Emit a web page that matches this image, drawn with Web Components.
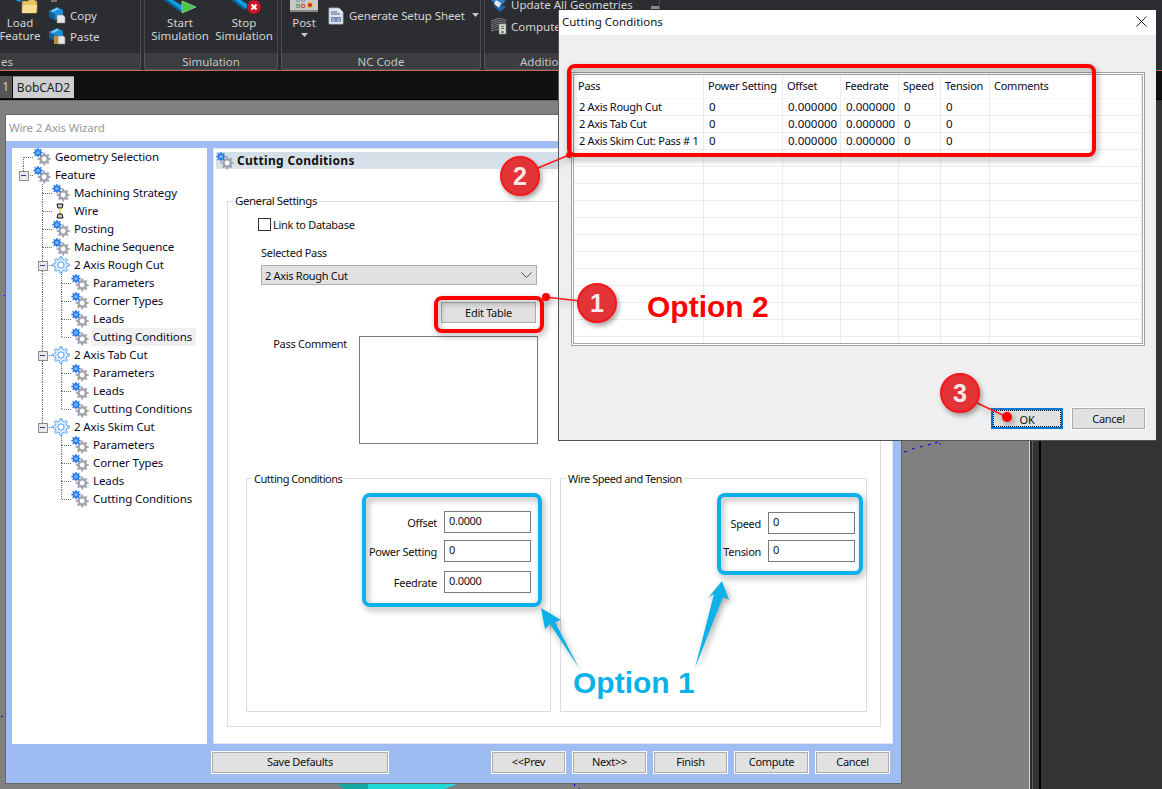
<!DOCTYPE html>
<html lang="en"><head><meta charset="utf-8"><title>Wire 2 Axis Wizard</title>
<style>html,body{margin:0;padding:0;background:#333}</style></head>
<body>
<cad-app>
  <cad-ribbon slot="ribbon">
    <ribbon-group label="es" style="margin-left:-10px;width:151px" align="left">
      <ribbon-big icon="load" style="width:58px">Load<br>Feature</ribbon-big>
      <ribbon-col style="padding-bottom:6px">
        <ribbon-small icon="cut"></ribbon-small>
        <ribbon-small icon="copy">Copy</ribbon-small>
        <ribbon-small icon="paste">Paste</ribbon-small>
      </ribbon-col>
    </ribbon-group>
    <ribbon-group label="Simulation" style="width:134px">
      <ribbon-big icon="start" style="width:64px;margin-left:3px">Start<br>Simulation</ribbon-big>
      <ribbon-big icon="stop" style="width:64px">Stop<br>Simulation</ribbon-big>
    </ribbon-group>
    <ribbon-group label="NC Code" style="width:200px">
      <ribbon-big icon="post" caret style="width:44px">Post</ribbon-big>
      <ribbon-col style="margin-left:2px;padding-bottom:27px;letter-spacing:-.1px">
        <ribbon-small icon="doc" caret>Generate Setup Sheet</ribbon-small>
      </ribbon-col>
    </ribbon-group>
    <ribbon-group label="Additio" style="width:176px" labelpad="35">
      <ribbon-col style="margin-left:5px;padding-bottom:16px;gap:1px">
        <ribbon-small icon="update" extra>Update All Geometries</ribbon-small>
        <ribbon-small icon="compute">Compute</ribbon-small>
      </ribbon-col>
    </ribbon-group>
  </cad-ribbon>
  <cad-tabs slot="tabs">
    <cad-tab>1</cad-tab>
    <cad-tab active>BobCAD2</cad-tab>
  </cad-tabs>
  <cad-workspace slot="workspace"></cad-workspace>

  <wizard-window slot="windows">
    <wizard-tree slot="tree">
      <tree-row g="r" icon="gears">Geometry Selection</tree-row>
      <tree-row g="E" icon="gears">Feature</tree-row>
      <tree-row g=" t" icon="gears">Machining Strategy</tree-row>
      <tree-row g=" t" icon="wire">Wire</tree-row>
      <tree-row g=" t" icon="gears">Posting</tree-row>
      <tree-row g=" t" icon="gears">Machine Sequence</tree-row>
      <tree-row g=" X" icon="pass">2 Axis Rough Cut</tree-row>
      <tree-row g=" vt" icon="gears">Parameters</tree-row>
      <tree-row g=" vt" icon="gears">Corner Types</tree-row>
      <tree-row g=" vt" icon="gears">Leads</tree-row>
      <tree-row g=" vl" icon="gears" selected>Cutting Conditions</tree-row>
      <tree-row g=" X" icon="pass">2 Axis Tab Cut</tree-row>
      <tree-row g=" vt" icon="gears">Parameters</tree-row>
      <tree-row g=" vt" icon="gears">Leads</tree-row>
      <tree-row g=" vl" icon="gears">Cutting Conditions</tree-row>
      <tree-row g=" E" icon="pass">2 Axis Skim Cut</tree-row>
      <tree-row g="  t" icon="gears">Parameters</tree-row>
      <tree-row g="  t" icon="gears">Corner Types</tree-row>
      <tree-row g="  t" icon="gears">Leads</tree-row>
      <tree-row g="  l" icon="gears">Cutting Conditions</tree-row>
    </wizard-tree>
    <wizard-panel slot="panel" heading="Cutting Conditions">
      <group-box label="General Settings" lt="-9" style="height:526px">
        <general-form>
          <group-box slot="left" label="Cutting Conditions" lt="-8" style="width:305px;height:234px">
            <field-stack pad="19" top="32">
              <form-field label="Offset" value="0.0000"></form-field>
              <form-field label="Power Setting" value="0" style="margin-top:7px"></form-field>
              <form-field label="Feedrate" value="0.0000" style="margin-top:9px"></form-field>
            </field-stack>
          </group-box>
          <group-box slot="right" label="Wire Speed and Tension" lt="-8" style="width:307px;height:234px">
            <field-stack pad="11" top="33">
              <form-field label="Speed" value="0"></form-field>
              <form-field label="Tension" value="0" style="margin-top:6px"></form-field>
            </field-stack>
          </group-box>
        </general-form>
      </group-box>
    </wizard-panel>
    <ui-button slot="save" style="width:176px">Save Defaults</ui-button>
    <ui-button slot="nav" style="width:73px">&lt;&lt;Prev</ui-button>
    <ui-button slot="nav" style="width:73px">Next&gt;&gt;</ui-button>
    <ui-button slot="nav" style="width:73px">Finish</ui-button>
    <ui-button slot="nav" style="width:73px">Compute</ui-button>
    <ui-button slot="nav" style="width:73px">Cancel</ui-button>
  </wizard-window>

  <table-dialog slot="windows" heading="Cutting Conditions"></table-dialog>
  <call-outs slot="windows"></call-outs>
</cad-app>

<script>
const def=(name,css,html)=>customElements.define(name,class extends HTMLElement{
  constructor(){super();this.attachShadow({mode:'open'});}
  connectedCallback(){this.shadowRoot.innerHTML=`<style>${css}</style>`+(typeof html==='function'?html(this):html);}
});
function gear(cx,cy,ro,ri,n){
  let d='';const st=Math.PI*2/n;
  for(let i=0;i<n;i++){const a=i*st;
    [[a-st*.28,ri],[a-st*.16,ro],[a+st*.16,ro],[a+st*.28,ri]].forEach((p,j)=>{
      const x=(cx+Math.cos(p[0])*p[1]).toFixed(2),y=(cy+Math.sin(p[0])*p[1]).toFixed(2);
      d+=(i===0&&j===0?'M':'L')+x+' '+y;});
  }
  return d+'Z';
}
const ICONS={
 gears:`<svg width="18" height="18" viewBox="0 0 18 18"><path d="${gear(11.2,11,6.6,4.9,8)}" fill="#a3a4af"/><circle cx="11.2" cy="11" r="2.4" fill="#fff"/><path d="${gear(5,4.6,4.8,3.5,8)}" fill="#2a7de8"/><circle cx="5" cy="4.6" r="1.7" fill="#7fb6f7"/></svg>`,
 pass:`<svg width="18" height="18" viewBox="0 0 18 18"><path d="${gear(9,9,8.3,6.2,8)}" fill="#d8e9fd" stroke="#57a3f4" stroke-width="1"/><circle cx="9" cy="9" r="3.1" fill="#fff" stroke="#57a3f4"/></svg>`,
 wire:`<svg width="18" height="18" viewBox="0 0 18 18"><path d="M5 2h6l-1 4H6z" fill="#ccc" stroke="#111"/><path d="M8 6v6" stroke="#e6d220" stroke-width="1.4"/><path d="M6 12h4l1 4H5z" fill="#ccc" stroke="#111"/></svg>`,
 load:`<svg width="36" height="16" viewBox="0 0 36 16"><path d="M10 0l5 0 5 3-3 1z" fill="#1197db"/><path d="M20 3h6l2-3h5v3h2v12H20z" fill="#e9c45c" stroke="#8d7a45" stroke-width=".8"/><path d="M21 7h14l-1 8H20z" fill="#f7de94"/><path d="M29 0h4v2h-4z" fill="#3fae49"/></svg>`,
 cut:`<svg width="16" height="16" viewBox="0 0 16 16"><path d="M2 13h6v3H2z" fill="#777"/></svg>`,
 copy:`<svg width="17" height="17" viewBox="0 0 17 17"><path d="M0 4l8-4 6 3v6l-8 4-6-3z" fill="#1a8fd6"/><path d="M0 4l6 3v6l-6-3z" fill="#0d5f9a"/><path d="M2 4l6-3 2 1-6 3z" fill="#8cd0f4"/><path d="M8 8h6l2 2v6H8z" fill="#e8e8ea" stroke="#888" stroke-width=".6"/></svg>`,
 paste:`<svg width="17" height="17" viewBox="0 0 17 17"><path d="M0 4l8-4 6 3v6l-8 4-6-3z" fill="#1a8fd6"/><path d="M0 4l6 3v6l-6-3z" fill="#0d5f9a"/><path d="M2 4l6-3 2 1-6 3z" fill="#8cd0f4"/><path d="M5 8h5v8H5z" fill="#c98a3c"/><path d="M9 8h6l1 2v6H9z" fill="#e8e8ea" stroke="#888" stroke-width=".6"/></svg>`,
 start:`<svg width="44" height="16" viewBox="0 0 44 16"><path d="M6 0h6l16 10-4 3z" fill="#0a9fe6"/><path d="M6 0l18 13-2 1L4 1z" fill="#0a5e94"/><path d="M24 3l14 6-14 6z" fill="#4cc24f" stroke="#8fe08a" stroke-width=".8"/></svg>`,
 stop:`<svg width="44" height="16" viewBox="0 0 44 16"><path d="M10 0h6l12 8-4 3z" fill="#0a9fe6"/><path d="M10 0l14 11-2 1L8 1z" fill="#0a5e94"/><circle cx="32" cy="9" r="7" fill="#c9182b" stroke="#7c1420" stroke-width=".8"/><path d="M29.500 6.500l5 5m0-5l-5 5" stroke="#fff" stroke-width="2"/></svg>`,
 post:`<svg width="28" height="14" viewBox="0 0 28 14"><path d="M0-4h28v16a2 2 0 0 1-2 2H2a2 2 0 0 1-2-2z" fill="#c9c9c6"/><path d="M0 12h28v2H0z" fill="#88898a"/><g fill="none" stroke-width="1.2"><circle cx="8" cy="2" r="1.7" stroke="#7aa0c8"/><circle cx="13" cy="2" r="1.7" stroke="#7aa0c8"/><circle cx="8" cy="8" r="1.7" stroke="#5aa95a"/><circle cx="13" cy="8" r="1.7" stroke="#d24d4d"/></g><circle cx="20" cy="7" r="2.6" fill="#d62b2b" stroke="#e0c63a"/></svg>`,
 doc:`<svg width="16" height="18" viewBox="0 0 16 18"><path d="M1 1h10l4 4v12H1z" fill="#dfe6f2" stroke="#aeb9cc" stroke-width=".8"/><path d="M3 5h6M3 7h9" stroke="#47638f"/><path d="M3 10h10v5H3z" fill="#6b86b2"/><path d="M4 12h3m2 0h3m-8 2h3m2 0h3" stroke="#e6ecf5" stroke-width=".8"/></svg>`,
 update:`<svg width="17" height="17" viewBox="0 0 17 17"><path d="M0 3l8-3 8 4-7 8z" fill="#2e7fc9"/><path d="M6 4l5 3-2 5-5-4z" fill="#dbe9f5"/><path d="M1 8l6 5 3 3 6-5-3-2-4 3z" fill="#1c65ac"/><path d="M0 0h4v3H0z" fill="#d3a24e"/></svg>`,
 compute:`<svg width="17" height="17" viewBox="0 0 17 17"><g stroke="#7d7d7d" fill="none"><path d="M1 3l8-3 7 2M1 5l8-3 7 2M1 7l8-3 7 2M1 9l8-3 7 2M1 11l8-3 7 2M1 13l8-2"/></g><path d="M9 6h7v10H9z" fill="#d8d8d8" stroke="#888" stroke-width=".6"/><path d="M11 8h3v1h-3zM11 10h3v1h-3z" fill="#666"/><path d="M11 13h3v2h-3z" fill="#4cae4c"/></svg>`
};
const caret=`<svg width="7" height="4" viewBox="0 0 7 4"><path d="M0 0h7L3.500 4z" fill="#c8c8c8"/></svg>`;

def('cad-app',`:host{display:block;position:relative;width:1162px;height:789px;overflow:hidden;background:#333;color:#111;font:11.5px "Noto Sans","Liberation Sans",sans-serif}
 .shell{display:flex;flex-direction:column;height:100%}`,
 `<div class="shell"><slot name="ribbon"></slot><slot name="tabs"></slot><slot name="workspace"></slot></div><slot name="windows"></slot>`);

def('cad-ribbon',`:host{display:flex;gap:3px;height:70px;background:#2c2d31;overflow:hidden;border-bottom:1px solid #c8684a;flex:none}`,`<slot></slot>`);
def('ribbon-group',`:host{display:flex;flex-direction:column;flex:none;height:70px;box-sizing:border-box;color:#d4d4d4;font-size:11.500px}
 .body{flex:1;display:flex;align-items:flex-end;min-height:0;overflow:hidden;height:53px;border-left:1px solid #4a4b4f;border-right:1px solid #4a4b4f}
 .label{height:17px;flex:none;line-height:17px;text-align:center;background:#3c3d41;color:#c4c4c4;border:1px solid #55565a;border-top:0;border-radius:0 0 3px 3px;box-sizing:border-box}`,
 el=>{const p=el.getAttribute('labelpad');const a=el.getAttribute('align');
  const st=p?`text-align:left;padding-left:${p}px`:(a==='left'?'text-align:left;padding-left:10px':'');
  return `<div class="body"><slot></slot></div><div class="label" style="${st}">${el.getAttribute('label')}</div>`});
def('ribbon-big',`:host{display:flex;flex-direction:column;align-items:center;flex:none;line-height:13px;text-align:center;padding-bottom:11px;white-space:nowrap}
 .i{display:block;height:16px;line-height:0;margin-bottom:2px}
 .c{display:block;height:4px;line-height:0;margin-top:4px;margin-bottom:5px}`,
 el=>`<span class="i">${ICONS[el.getAttribute('icon')]||''}</span><span><slot></slot></span>${el.hasAttribute('caret')?`<span class="c">${caret}</span>`:''}`);
def('ribbon-col',`:host{display:flex;flex-direction:column;flex:none;padding-bottom:5px}`,`<slot></slot>`);
def('ribbon-small',`:host{display:flex;align-items:center;height:21px;gap:4px;white-space:nowrap;flex:none}
 .i{width:17px;height:17px;line-height:0;flex:none}.c{margin-left:3px;line-height:0;margin-top:-2px}
 .x{margin:6px 0 0 14px;width:8px;height:3px;background:#8a8b8e;display:block}`,
 el=>`<span class="i">${ICONS[el.getAttribute('icon')]||''}</span><slot></slot>${el.hasAttribute('caret')?`<span class="c">${caret}</span>`:''}${el.hasAttribute('extra')?'<span class="x"></span>':''}`);

def('cad-tabs',`:host{display:flex;align-items:flex-end;height:29px;box-sizing:border-box;background:#111;flex:none;padding-bottom:1px;gap:1px;border-bottom:1px solid #000}`,`<slot></slot>`);
def('cad-tab',`:host{display:block;height:22px;line-height:22px;font-size:12px;width:12px;text-align:right;padding:0 3px 0 0;color:#ccc;background:#555;box-sizing:border-box}
 :host([active]){background:#cfcfcf;color:#222;border-top:1px solid #8f8f8f;width:61px;text-align:center;padding:0}`,`<slot></slot>`);

def('cad-workspace',`:host{display:flex;flex:1;min-height:0}
 .canvas{flex:none;width:1029px;background:#808080;border-top:1px solid #6c6c6c;position:relative;overflow:hidden;box-sizing:border-box}
 svg{position:absolute;left:0;top:0}
 .rule{width:1px;background:#d8d8d8}.a{width:2px;background:#2a2a2a}.b{width:1px;background:#5d5d5d}.d{width:6px;background:#333}.e{width:2px;background:#000}
 .side{flex:1;background:#333}`,
 `<div class="canvas"><svg width="1029" height="689" viewBox="0 100 1029 689"><path d="M335 782h33v7h-22z" fill="#17a8a4"/><path d="M368 782h92l-18 7h-74z" fill="#20d8d8"/><g fill="none" stroke="#0000e0"><path d="M904 451l4-1M912 448l3-1M920 446l3-1M928 444l3-1M935 442l3-1l3 3" stroke-dasharray="3 2"/><path d="M574 782l1 3M579 787l1 2"/><path d="M4 294l2 2"/><path d="M1 716l2-1"/></g></svg></div>
  <div class="rule"></div><div class="a"></div><div class="b"></div><div class="d"></div><div class="e"></div><div class="side"></div>`);

def('wizard-window',`:host{position:absolute;left:6px;top:115px;width:895px;height:668px;display:flex;flex-direction:column;background:#9fbcf3;box-shadow:0 0 0 1px #666}
 .title{height:26px;flex:none;background:#fff;color:#9a9a9a;line-height:26px;padding-left:3px;letter-spacing:-.2px}
 .body{flex:1;display:flex;flex-direction:column;padding:7px 8px 10px 6px;min-height:0}
 .top{display:flex;gap:6px;height:596px;flex:none}
 .foot{display:flex;margin-top:8px;padding-left:200px;padding-right:4px}
 .nav{margin-left:auto;display:flex;gap:8px}`,
 `<div class="title">Wire 2 Axis Wizard</div><div class="body"><div class="top"><slot name="tree"></slot><slot name="panel"></slot></div>
  <div class="foot"><slot name="save"></slot><div class="nav"><slot name="nav"></slot></div></div></div>`);
def('wizard-tree',`:host{display:block;width:195px;flex:none;background:#fff;padding-left:2px;box-sizing:border-box}`,`<slot></slot>`);
def('tree-row',`:host{display:flex;align-items:center;height:18px;white-space:nowrap;color:#0a0a28;letter-spacing:-.1px}
 svg.g{display:block;flex:none}
 .i{width:18px;height:18px;line-height:0;flex:none}
 .t{margin-left:2px;padding:0 2px;height:18px;line-height:18px}
 :host([selected]) .t{background:#f0f0f0;padding-right:4px}`,
 el=>{
  const L='stroke="#6b6b6b" stroke-dasharray="1 1" fill="none" shape-rendering="crispEdges"';
  const up=`<path d="M9.500 0V9" ${L}/>`,dn=`<path d="M9.500 9V18" ${L}/>`,rt=`<path d="M9.500 9.500H19" ${L}/>`;
  const box=`<rect x="5" y="5" width="9" height="9" fill="#e9e9e9" stroke="#8e8e8e" shape-rendering="crispEdges"/><path d="M7 9.500h5" stroke="#2f3f8f" shape-rendering="crispEdges"/>`;
  const m={' ':'','v':up+dn,'t':up+dn+rt,'l':up+rt,'r':dn+rt,'E':up+rt+box,'X':up+dn+rt+box};
  const cells=[...el.getAttribute('g')].map(c=>`<svg class="g" width="19" height="18" viewBox="0 0 19 18">${m[c]}</svg>`).join('');
  return cells+`<span class="i">${ICONS[el.getAttribute('icon')]}</span><span class="t"><slot></slot></span>`;
 });
def('wizard-panel',`:host{display:block;flex:1;background:#fff;box-sizing:border-box;border:1px solid #dfe6f5;padding:3px 2px 0 2px}
 .h{display:flex;align-items:center;height:17px;gap:3px;background:linear-gradient(#d4dee8,#d9e2ea);font-weight:700;font-size:12px;letter-spacing:.3px;color:#111}
 .i{width:18px;height:18px;line-height:0}
 .c{padding:32px 9px 0 11px}`,
 el=>`<div class="h"><span class="i">${ICONS.gears}</span>${el.getAttribute('heading')}</div><div class="c"><slot></slot></div>`);
def('group-box',`:host{display:block;position:relative;border:1px solid #dcdcdc;box-sizing:border-box}
 .l{position:absolute;left:5px;background:#fff;padding:0 2px;line-height:15px;white-space:nowrap;color:#111;letter-spacing:-.45px}`,
 el=>`<span class="l" style="top:${el.getAttribute('lt')||-8}px">${el.getAttribute('label')}</span><slot></slot>`);
def('general-form',`:host{display:block;padding:15px 0 0 30px;font-size:11px;letter-spacing:-.3px}
 .chk{display:flex;align-items:center;gap:2px;height:14px}
 .box{width:13px;height:13px;border:1px solid #333;box-sizing:border-box;background:#fff}
 .lbl{margin:14px 0 0 3px;line-height:16px;height:16px}
 .sel{margin:4px 0 0 3px;width:276px;height:20px;box-sizing:border-box;background:#e1e1e1;border:1px solid #adadad;display:flex;align-items:center;justify-content:space-between;padding:0 4px 0 3px}
 .btn{margin:17px 0 0 183px;display:block}
 .cm{display:flex;margin-top:13px}
 .cm span{width:89px;text-align:right;line-height:16px;margin-right:12px;flex:none}
 .cm div{width:179px;height:108px;border:1px solid #7a7a7a;box-sizing:border-box;background:#fff}
 .subs{display:flex;gap:9px;margin:34px 0 0 -12px}`,
 `<div class="chk"><span class="box"></span>Link to Database</div>
  <div class="lbl">Selected Pass</div>
  <div class="sel">2 Axis Rough Cut<svg width="11" height="6" viewBox="0 0 11 6"><path d="M.5.500l5 5 5-5" fill="none" stroke="#555"/></svg></div>
  <ui-button class="btn" style="width:95px;height:21px;line-height:19px">Edit Table</ui-button>
  <div class="cm"><span>Pass Comment</span><div></div></div>
  <div class="subs"><slot name="left"></slot><slot name="right"></slot></div>`);
def('field-stack',`:host{display:flex;flex-direction:column;align-items:flex-end}`,
 el=>{el.style.paddingRight=el.getAttribute('pad')+'px';el.style.paddingTop=el.getAttribute('top')+'px';return `<slot></slot>`});
def('form-field',`:host{display:flex;align-items:center;justify-content:flex-end;gap:7px;white-space:nowrap}
 .v{width:87px;height:22px;border:1px solid #7a7a7a;box-sizing:border-box;background:#fff;padding-left:4px;line-height:17px;color:#111}`,
 el=>`<span>${el.getAttribute('label')}</span><div class="v">${el.getAttribute('value')}</div>`);
def('ui-button',`:host{display:block;height:21px;text-align:center;line-height:18px;font-size:11px;letter-spacing:-.3px;background:#e1e1e1;color:#111;border:1px solid #adadad;box-shadow:0 0 0 1px #fff;white-space:nowrap;box-sizing:border-box}
 :host([default]){border:2px solid #0078d7;box-shadow:none}
 :host([default]) .d{display:block;border:1px dotted #000;height:15px;line-height:17px}`,
 `<span class="d"><slot></slot></span>`);

def('table-dialog',`:host{position:absolute;left:558px;top:10px;width:598px;height:431px;box-sizing:border-box;background:#efefef;border-left:1px solid #555;border-bottom:1px solid #555;display:flex;flex-direction:column}
 .t{height:25px;flex:none;box-sizing:border-box;background:#fff;display:flex;align-items:center;justify-content:space-between;padding:0 9px 2px 3px}
 .g{margin:37px 0 0 12px;width:574px;height:274px;flex:none;box-sizing:border-box;border:1px solid #a0a0a0;padding:1px;background:#fff}
 .grid{height:100%;box-sizing:border-box;border:1px solid #a8a8a8;overflow:hidden;background:#fff;display:grid;grid-template-columns:130px 79px 58px 58px 42px 49px 1fr;grid-template-rows:24px;grid-auto-rows:17px;white-space:nowrap}
 .c{border-right:1px solid #ececec;border-bottom:1px solid #ececec;box-sizing:border-box;padding-left:5px;line-height:16px;color:#0a0a28}
 .h{line-height:22px;padding-left:4px;border-bottom-color:#f6f6f6;font-size:11px;letter-spacing:-.25px}
 .n{font-size:11px;letter-spacing:-.3px;overflow:hidden}
 .b{display:flex;justify-content:flex-end;gap:9px;margin-top:62px;padding-right:11px}`,
 el=>{
  const H=['Pass','Power Setting','Offset','Feedrate','Speed','Tension','Comments'];
  const D=[['2 Axis Rough Cut','0','0.000000','0.000000','0','0',''],['2 Axis Tab Cut','0','0.000000','0.000000','0','0',''],['2 Axis Skim Cut: Pass # 1','0','0.000000','0.000000','0','0','']];
  while(D.length<15)D.push(['','','','','','','']);
  const cells=H.map(h=>`<div class="c h">${h}</div>`).join('')+D.map(r=>r.map((v,i)=>`<div class="c${i?'':' n'}">${v}</div>`).join('')).join('');
  return `<div class="t"><span>${el.getAttribute('heading')}</span><svg width="11" height="11" viewBox="0 0 11 11"><path d="M.5.500l10 10m0-10l-10 10" stroke="#222" fill="none"/></svg></div>
   <div class="g"><div class="grid">${cells}</div></div>
   <div class="b"><ui-button default style="width:72px">OK</ui-button><ui-button style="width:73px;line-height:19px">Cancel</ui-button></div>`;
 });

def('step-badge',`:host{position:absolute;width:40px;height:40px;margin:-20px 0 0 -20px;box-sizing:border-box;border-radius:50%;background:#e23437;border:2px solid #f5171c;color:#fbe9e9;font:700 25px/36px "Liberation Sans",sans-serif;text-align:center;box-shadow:2px 3px 5px rgba(0,0,0,.35)}`,`<slot></slot>`);
def('call-label',`:host{position:absolute;font:700 30px/34px "Liberation Sans",sans-serif;white-space:nowrap}`,`<slot></slot>`);
def('call-outs',`:host{position:absolute;left:0;top:0;width:1162px;height:789px;pointer-events:none}
 svg{position:absolute;left:0;top:0}
 .s{filter:drop-shadow(2px 3px 3px rgba(0,0,0,.35))}`,
 `<svg width="1162" height="789" viewBox="0 0 1162 789">
   <g class="s">
   <g fill="none" stroke="#ff0000" stroke-width="4">
     <rect x="436" y="298" width="106" height="33" rx="6"/>
     <rect x="569" y="66" width="525" height="89" rx="6"/>
   </g>
   <g fill="none" stroke="#ff1a1a" stroke-width="1.6">
     <path d="M545 297L580 301"/><path d="M538 168L569 155"/><path d="M977 403L1007 417"/>
   </g>
   <g fill="#ff0000"><circle cx="546" cy="297" r="4"/><circle cx="569" cy="155" r="3"/><circle cx="1007" cy="417" r="5"/></g>
   <g fill="none" stroke="#0cb1ea" stroke-width="4">
     <rect x="364" y="495" width="176" height="110" rx="6"/>
     <rect x="719" y="495" width="142" height="78" rx="6"/>
   </g>
   <g fill="#0cb1ea">
     <path d="M541 608L561 620L555 622L579 668L550 624L545 629z"/>
     <path d="M722 581L729 600L723 597L695 668L714 594L708 598z"/>
   </g></g></svg>
  <step-badge style="left:520px;top:176px">2</step-badge>
  <step-badge style="left:597px;top:303px">1</step-badge>
  <step-badge style="left:960px;top:393px">3</step-badge>
  <call-label style="left:647px;top:290px;color:#f00">Option 2</call-label>
  <call-label style="left:573px;top:666px;color:#0cb1ea">Option 1</call-label>`);
</script>
</body></html>
